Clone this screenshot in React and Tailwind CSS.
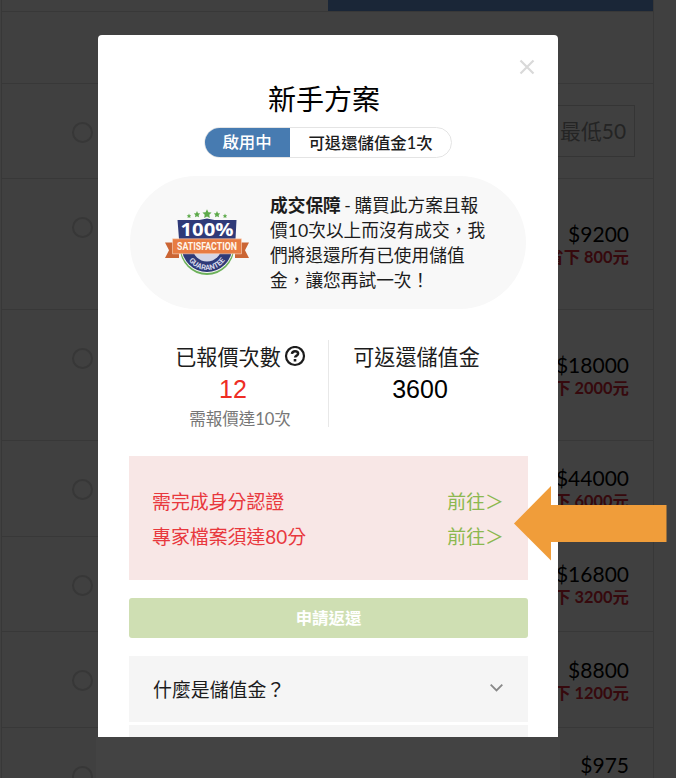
import React from "react";

const rows = [
  { h: "h-[131px]", price: "$9200", save: "省下 800元", pad: "pt-[43px]" },
  { h: "h-[131px]", price: "$18000", save: "省下 2000元", pad: "pt-[43px]" },
  { h: "h-[96px]", price: "$44000", save: "省下 6000元", pad: "pt-[25px]" },
  { h: "h-[95px]", price: "$16800", save: "省下 3200元", pad: "pt-[25px]" },
  { h: "h-[96px]", price: "$8800", save: "省下 1200元", pad: "pt-[26px]" },
  { h: "h-[96px]", price: "$975", save: "", pad: "pt-[25px]" },
];

function Radio() {
  return <span className="mt-[38px] ml-[70px] size-[21px] shrink-0 rounded-full border-2 border-[#373737]" />;
}

function Pricing() {
  return (
    <div className="h-[778px] overflow-hidden bg-[#404040] pl-[1px]">
      <div className="w-[653px] border-x border-[#383838]">
        <div className="flex h-[12px] justify-end border-b border-[#383838]">
          <div className="h-[11px] w-[325px] bg-[#1a2637]" />
        </div>
        <div className="h-[72px] border-b border-[#383838]" />
        <div className="flex h-[95px] items-start justify-between border-b border-[#383838]">
          <Radio />
          <div className="mt-[21px] mr-[18px] flex h-[52px] w-[120px] items-center justify-end border border-[#353535] pr-[8px] text-[20.9px] text-[#242424]">
            最低50
          </div>
        </div>
        {rows.map((r) => (
          <div key={r.price} className={`flex items-start justify-between border-b border-[#383838] ${r.h}`}>
            <Radio />
            <div className={`pr-[24px] text-right ${r.pad}`}>
              <div className="h-[24px] text-[21px] leading-[24px] text-black">{r.price}</div>
              <div className="h-[22px] text-[16.4px] leading-[22px] font-bold text-[#36090d]">{r.save}</div>
            </div>
          </div>
        ))}
      </div>
    </div>
  );
}

function Star({ x, y, s }) {
  return (
    <polygon
      transform={`translate(${x} ${y}) scale(${s})`}
      points="0,-1 .29,-.35 .95,-.31 .48,.15 .59,.81 0,.5 -.59,.81 -.48,.15 -.95,-.31 -.29,-.35"
      fill="#5eaa4b"
    />
  );
}

function Badge() {
  return (
    <svg className="h-[66px] w-[86px] shrink-0 overflow-visible" viewBox="0 0 86 66">
      <circle cx="43" cy="38" r="27" fill="#6db15a" />
      <circle cx="43" cy="36.8" r="26.2" fill="#f7f7f7" />
      <circle cx="43" cy="36.5" r="25.4" fill="#2f3a78" />
      <circle cx="43" cy="37" r="14.5" fill="#d4d6e5" />
      <rect x="10" y="7" width="66" height="22" fill="#f8f8f8" />
      <path d="M13.500 10h22l7.500-1.500 7.500 1.500h22l-1 19H15z" fill="#2f3a78" />
      <Star x={25} y={6} s={2.4} />
      <Star x={33} y={4.5} s={3.4} />
      <Star x={43} y={4} s={4.8} />
      <Star x={53} y={4.5} s={3.4} />
      <Star x={61} y={6} s={2.4} />
      <path d="M1 32.500h14v15.500H1l4-7.700zM85 32.500H71v15.500h14l-4-7.700z" fill="#cb6534" />
      <path d="M8.500 28.800h69v15H8.500z" fill="#e87c42" stroke="#f8d8c4" strokeWidth=".6" />
      <text x="43" y="26.300" textAnchor="middle" textLength="53" lengthAdjust="spacingAndGlyphs" fontSize="18.500" fontWeight="700" fill="#fff" fontFamily="Open Sans, sans-serif">100%</text>
      <text x="43" y="40.300" textAnchor="middle" textLength="60" lengthAdjust="spacingAndGlyphs" fontSize="11" fontWeight="700" fill="#fff5ea" fontFamily="Roboto, sans-serif">SATISFACTION</text>
      <path id="guarantee" d="M21 38a22 22 0 0 0 44 0" fill="none" />
      <text fontSize="7.400" fontWeight="700" fill="#d8daea" fontFamily="Roboto, sans-serif">
        <textPath href="#guarantee" startOffset="50%" textAnchor="middle">GUARANTEE</textPath>
      </text>
    </svg>
  );
}

function Requirement({ label }) {
  return (
    <div className="flex h-[35.5px] items-center justify-between text-[18.9px]">
      <span className="text-[#e8383d]">{label}</span>
      <span className="text-[#8bb84f]">前往＞</span>
    </div>
  );
}

function Modal() {
  return (
    <div className="absolute top-[35px] left-[98px] flex h-[702px] w-[460px] flex-col overflow-hidden rounded-t-[4px] bg-white px-[30px] text-[#1c1c1c] *:shrink-0">
      <div className="flex h-[44px] items-end justify-end">
        <svg className="mr-[-7px] mb-[4px] size-[16px]" viewBox="0 0 16 16" stroke="#d9d9d9" strokeWidth="2.2">
          <path d="M1.5 1.5l13 13M14.5 1.5l-13 13" />
        </svg>
      </div>
      <h1 className="h-[40px] pr-[8px] text-center text-[28px] leading-[40px] text-black">新手方案</h1>
      <div className="mr-auto ml-[76px] mt-[8px] flex h-[31px] w-[248px] overflow-hidden rounded-full border border-[#e4e4e4] text-[16.4px] leading-[29px] font-medium">
        <div className="-my-px -ml-px w-[86px] bg-[#477bb1] text-center leading-[30px] text-white">啟用中</div>
        <div className="flex-1 text-center">可退還儲值金1次</div>
      </div>
      <div className="mx-[2px] mt-[18px] flex h-[133px] items-center rounded-full bg-[#f8f8f8] pl-[34px]">
        <Badge />
        <p className="ml-[20px] w-[222px] text-[17.7px] leading-[25px] whitespace-nowrap">
          <b>成交保障</b>
          <span className="[word-spacing:-1px]"> - 購買此方案且報</span>
          <br />
          價10次以上而沒有成交，我
          <br />
          們將退還所有已使用儲值
          <br />
          金，讓您再試一次！
        </p>
      </div>
      <div className="mt-[31px] flex h-[87px] text-center">
        <div className="w-[201px] border-r border-[#e8e8e8] pl-[24px]">
          <div className="flex h-[34px] items-center justify-center pl-[1px] text-[21.1px] whitespace-nowrap">
            已報價次數
            <svg className="ml-[3px] size-[22px]" viewBox="0 0 22 22" fill="none" stroke="#1c1c1c">
              <circle cx="11" cy="10" r="9" strokeWidth="2.200" />
              <path d="M7.900 7.900C8.200 6.100 9.400 5.300 11 5.300c1.800 0 3.100.9 3.100 2.400 0 2-3 1.900-3 3.900" strokeWidth="2.500" />
              <path d="M11 13v2.500" strokeWidth="2.600" />
            </svg>
          </div>
          <div className="h-[31px] pr-[14px] font-['Liberation_Sans'] text-[25px] leading-[31px] text-[#ee2d24]">12</div>
          <div className="h-[28px] text-[16.5px] leading-[28px] text-[#777777]">需報價達10次</div>
        </div>
        <div className="w-[176px]">
          <div className="h-[34px] pr-[1px] text-[21.1px] leading-[34px]">可返還儲值金</div>
          <div className="h-[31px] pl-[6px] font-['Liberation_Sans'] text-[25px] leading-[31px] text-black">3600</div>
        </div>
      </div>
      <div className="mt-[29px] mr-[0px] ml-[1px] h-[124px] bg-[#f8e7e6] pr-[24px] pl-[23px] pt-[28px]">
        <Requirement label="需完成身分認證" />
        <Requirement label="專家檔案須達80分" />
      </div>
      <div className="mt-[18px] ml-[1px] h-[40px] rounded-[3px] bg-[#cfdfb3] text-center text-[16.4px] leading-[40px] font-bold text-white">申請返還</div>
      <div className="mt-[18px] ml-[1px] flex h-[66px] items-center justify-between bg-[#f5f5f5] pt-[3px] pr-[25px] pl-[24px] text-[18.9px]">
        什麼是儲值金？
        <svg className="mb-[6px] size-[13px]" viewBox="0 0 13 13" fill="none" stroke="#888" strokeWidth="1.8">
          <path d="M.7 3.700l5.800 5.800 5.800-5.800" />
        </svg>
      </div>
      <div className="mt-[3px] ml-[1px] h-[20px] bg-[#f5f5f5]" />
    </div>
  );
}

export default function App() {
  return (
    <main className="relative h-[778px] w-[676px] overflow-hidden font-['Lato','Noto_Sans_CJK_TC',sans-serif]">
      <Pricing />
      <div className="absolute top-[737px] left-[96px] h-[41px] w-[464px] bg-[#434343]" />
      <Modal />
      <svg className="absolute top-[486px] left-[513px] h-[75px] w-[154px]" viewBox="0 0 154 75">
        <path d="M1 37.5L38 0v19h115.500v37H38v18.500z" fill="#f09d3a" />
      </svg>
    </main>
  );
}
